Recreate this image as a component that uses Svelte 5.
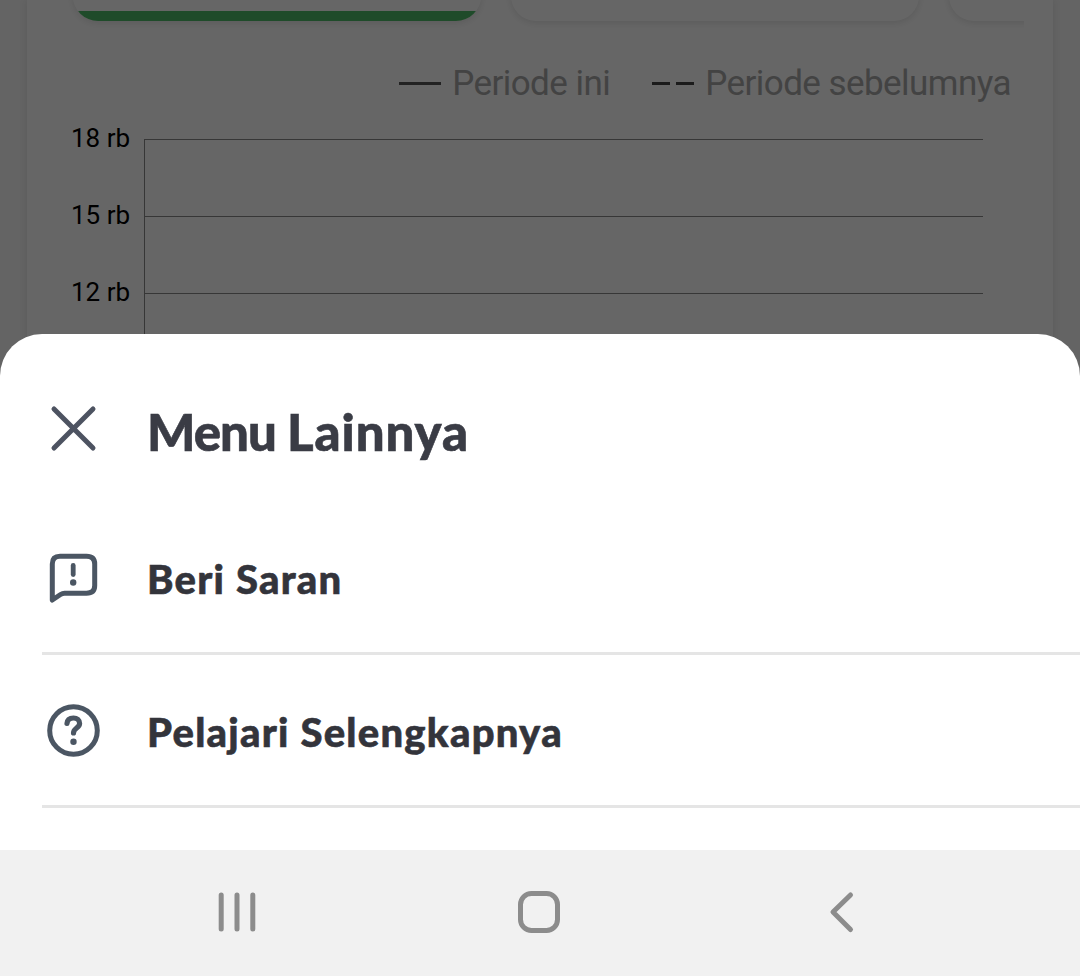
<script>
  const ticks = ['18 rb', '15 rb', '12 rb'];
  const items = [
    { id: 'feedback', label: 'Beri Saran' },
    { id: 'help', label: 'Pelajari Selengkapnya' }
  ];
</script>

<div class="screen">
  <main class="page">
    <section class="panel">
      <div class="cards">
        <div class="card selected"></div>
        <div class="card"></div>
        <div class="card"></div>
      </div>
      <div class="legend">
        <span class="key"><i class="line"></i><span>Periode ini</span></span>
        <span class="key"><i class="line dashed"></i><span>Periode sebelumnya</span></span>
      </div>
      <div class="chart">
        {#each ticks as tick}
          <div class="row"><span class="tick">{tick}</span><div class="plot"></div></div>
        {/each}
      </div>
    </section>
  </main>
  <div class="scrim"></div>

  <div class="sheet">
    <header>
      <svg width="52" height="52" viewBox="0 0 52 52" fill="none" stroke="#4d5361" stroke-width="5" stroke-linecap="round"><path d="M7 7 46 46M46 7 7 46" /></svg>
      <h1><span>Menu</span> <span class="wide">Lainnya</span></h1>
    </header>
    {#each items as item}
      <div class="item">
        {#if item.id === 'feedback'}
          <svg width="54" height="54" viewBox="0 0 54 54" fill="none" stroke="#4b5663" stroke-width="5" stroke-linecap="round" stroke-linejoin="round">
            <path d="M6.300 49V13Q6.300 5.300 14 5.300H40.500Q48.700 5.300 48.700 13V34.500Q48.700 42.200 40.500 42.200H18.500Q16.500 42.200 14.500 43.500Z" />
            <path d="M27.200 14.500V23.500" stroke-width="4.800" /><circle cx="27.200" cy="31.500" r="3.200" fill="#4b5663" stroke="none" />
          </svg>
        {:else}
          <svg width="54" height="54" viewBox="0 0 54 54" fill="none" stroke="#4b5663" stroke-width="5" stroke-linecap="round" stroke-linejoin="round">
            <circle cx="27.500" cy="26.500" r="23.800" />
            <path d="M21 19.500C21.300 15.700 24 14 27.500 14C31 14 33.600 16.200 33.600 19.500C33.600 24 27.500 24.200 27.500 29" stroke-width="5.200" />
            <circle cx="27.500" cy="37.700" r="3.200" fill="#4b5663" stroke="none" />
          </svg>
        {/if}
        <span>{item.label}</span>
      </div>
    {/each}
  </div>

  <nav>
    <svg width="1080" height="126" viewBox="0 0 1080 126" fill="none" stroke="#8c8c8c" stroke-width="5" stroke-linecap="round" stroke-linejoin="round">
      <path d="M221.200 45V79M237 45V79M252.800 45V79" />
      <rect x="520.500" y="43.500" width="37" height="37" rx="11" />
      <path d="M850.500 45 833 62 850.500 79.500" />
    </svg>
  </nav>
</div>

<style>
  :global(body) { margin: 0; }
  .screen { position: relative; width: 1080px; height: 976px; overflow: hidden; background: #f9f9f9; font-family: Roboto, sans-serif; display: flex; flex-direction: column; }
  .page { height: 376px; overflow: hidden; padding: 0 27px; }
  .panel { height: 400px; background: #fff; box-shadow: 0 0 8px rgba(0, 0, 0, .1); }
  .cards { height: 44px; width: 951px; margin-left: 16px; padding-left: 30px; display: flex; gap: 30px; overflow: hidden; }
  .card { flex: none; box-sizing: border-box; width: 408px; height: 100px; margin-top: -79px; border-radius: 25px; background: #fff; box-shadow: 0 2px 7px rgba(0, 0, 0, .11); }
  .selected { background: linear-gradient(#fff 0 90px, #4fbb69 90px); }
  .legend { height: 78px; display: flex; align-items: center; justify-content: flex-end; gap: 42px; padding-right: 42px; font-size: 35px; letter-spacing: -.55px; color: #a8a8a8; white-space: nowrap; }
  .key { display: flex; align-items: center; gap: 11px; }
  .line { width: 42px; height: 3px; background: #555; }
  .dashed { background: linear-gradient(90deg, #444 0 18px, transparent 18px 24px, #444 24px); }
  .chart { padding: 17px 70px 0 44px; }
  .row { height: 77px; display: flex; gap: 15px; }
  .tick { width: 58px; font-size: 26px; line-height: 30px; margin-top: -16px; color: #000; white-space: nowrap; }
  .plot { flex: 1; border-top: 1px solid #8b8b8b; border-left: 1px solid #8b8b8b; }
  .scrim { position: absolute; inset: 0; background: rgba(0, 0, 0, .6); }
  .sheet { position: absolute; left: 0; right: 0; top: 334px; height: 516px; box-sizing: border-box; border-radius: 42px 42px 0 0; background: #fff; font-family: Lato, sans-serif; color: #33343b; -webkit-text-stroke: .6px currentColor; }
  header { height: 168px; box-sizing: border-box; padding: 68px 0 0 47px; display: flex; gap: 48px; }
  h1 { margin: 0; font-size: 51px; line-height: 60px; font-weight: 900; letter-spacing: -1px; white-space: nowrap; color: #3a3c45; }
  .wide { letter-spacing: .9px; }
  .item { height: 153px; box-sizing: border-box; margin-left: 42px; padding: 2px 0 0 4px; border-bottom: 3px solid #e5e5e5; display: flex; align-items: center; gap: 47px; font-size: 40px; font-weight: 900; letter-spacing: 1.25px; white-space: nowrap; }
  .item span { padding-top: 1px; }
  nav { margin-top: auto; height: 126px; background: #f1f1f1; position: relative; }
  nav svg { display: block; }
</style>
